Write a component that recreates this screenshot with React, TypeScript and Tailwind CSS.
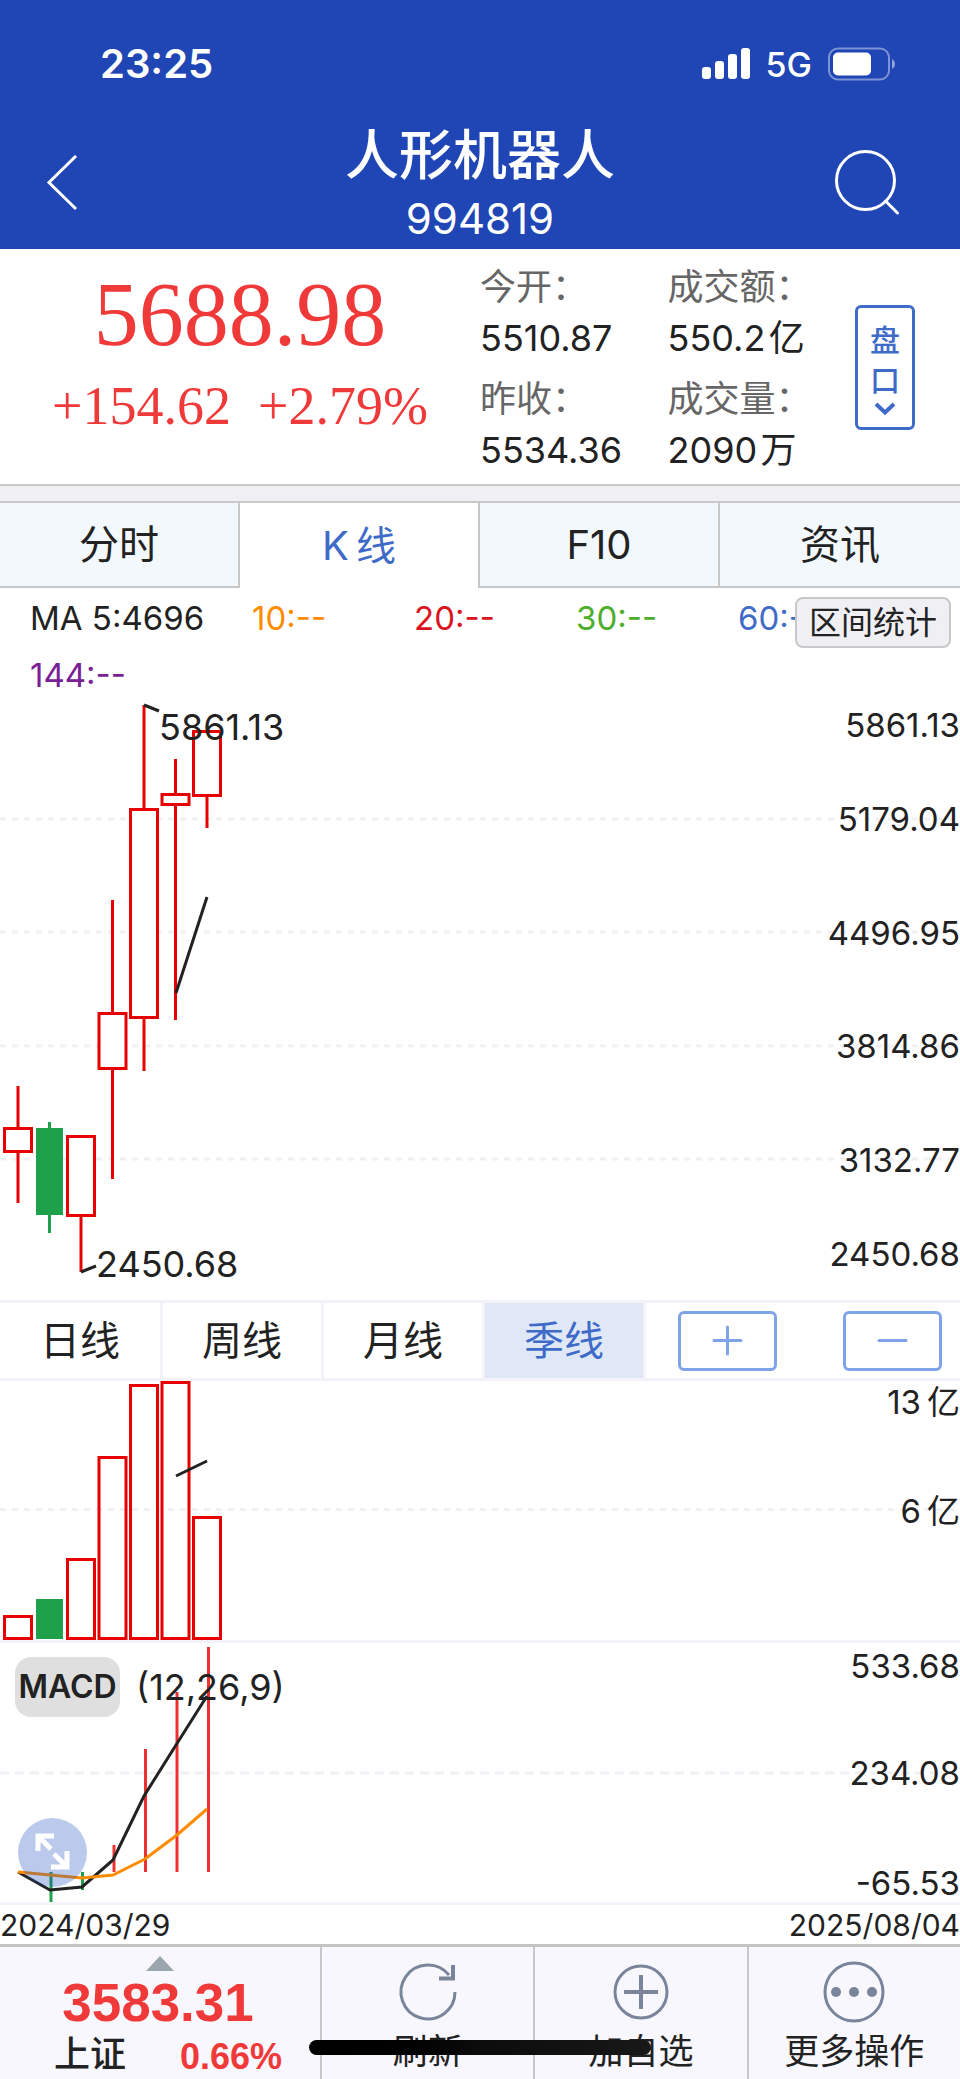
import { useState } from "react";

const PITCH = 31.5;
const FIRST_X = 18;
const cx = (i: number) => FIRST_X + i * PITCH;

// y values are relative to the top of each chart pane
const candles = [
  { up: true, high: 386, top: 427, bottom: 453, low: 503 },
  { up: false, high: 422, top: 428, bottom: 515, low: 533 },
  { up: true, high: 436, top: 435, bottom: 517, low: 572 },
  { up: true, high: 200, top: 312, bottom: 370, low: 479 },
  { up: true, high: 5, top: 108, bottom: 319, low: 371 },
  { up: true, high: 59, top: 93, bottom: 106, low: 320 },
  { up: true, high: 31, top: 30, bottom: 97, low: 128 },
];

const volumes = [234, 218, 177, 75, 3, 0, 135];

const macdBars = [
  { up: false, from: 229, to: 231 },
  { up: false, from: 229, to: 259 },
  { up: false, from: 229, to: 247 },
  { up: true, from: 202, to: 229 },
  { up: true, from: 106, to: 229 },
  { up: true, from: 49, to: 229 },
  { up: true, from: 4, to: 229 },
];

const priceLabels = [
  { text: "5861.13", y: 37 },
  { text: "5179.04", y: 131 },
  { text: "4496.95", y: 245 },
  { text: "3814.86", y: 358 },
  { text: "3132.77", y: 472 },
  { text: "2450.68", y: 566 },
];

const averages = [
  { text: "MA 5:4696", className: "w-[222px] text-[#222222]" },
  { text: "10:--", className: "w-[162px] text-[#ff8c00]" },
  { text: "20:--", className: "w-[162px] text-[#d9141e]" },
  { text: "30:--", className: "w-[162px] text-[#4dae2b]" },
  { text: "60:--", className: "w-[162px] text-[#3f6bc8]" },
  { text: "144:--", className: "w-[162px] text-[#7a1f96]" },
];

function StatusBar() {
  return (
    <div className="flex h-[120px] items-center justify-between pt-2 pr-[64px] pl-[100px]">
      <span className="text-[40px] font-semibold">23:25</span>
      <div className="flex items-center">
        <svg width="48" height="32" fill="currentColor">
          <rect x="0" y="19" width="9" height="12" rx="3" />
          <rect x="13" y="13" width="9" height="18" rx="3" />
          <rect x="26" y="6" width="9" height="25" rx="3" />
          <rect x="39" y="0" width="9" height="31" rx="3" />
        </svg>
        <span className="mx-4 text-[34px] font-medium">5G</span>
        <svg width="68" height="34" fill="none">
          <rect x="1" y="1.5" width="60" height="31" rx="9" stroke="white" strokeOpacity="0.42" strokeWidth="2" />
          <rect x="5" y="5.5" width="38" height="23" rx="5" fill="white" />
          <path d="M64 12c4 2 4 8 0 10z" fill="white" fillOpacity="0.5" />
        </svg>
      </div>
    </div>
  );
}

function Header() {
  return (
    <header className="bg-[#1f46b4] text-white">
      <StatusBar />
      <div className="flex h-[129px] items-center justify-between pr-[60px] pb-1 pl-[46px]">
        <button aria-label="返回" className="w-[79px]">
          <svg width="32" height="56" fill="none" stroke="currentColor" strokeWidth="3">
            <path d="M30 1L3 27.500L30 54" />
          </svg>
        </button>
        <div className="pt-1 text-center">
          <h1 className="text-[54px] leading-[68px] font-medium">人形机器人</h1>
          <p className="text-[42px] leading-[58px] font-normal">994819</p>
        </div>
        <button aria-label="搜索">
          <svg width="65" height="65" fill="none" stroke="currentColor" strokeWidth="3">
            <circle cx="30.500" cy="30.500" r="29" />
            <path d="M50.500 51L62.500 63" strokeLinecap="round" />
          </svg>
        </button>
      </div>
    </header>
  );
}

function Stat({ label, value }: { label: string; value: string }) {
  return (
    <div>
      <dt className="leading-[58px] text-[#666666]">{label}</dt>
      <dd className="leading-[44px]">{value}</dd>
    </div>
  );
}

function Quote() {
  return (
    <section className="flex h-[235px] bg-white">
      <div className="w-1/2 pt-3.5 text-center font-['Liberation_Serif',serif] text-[#f03a3a]">
        <p className="text-[90px] leading-[104px]">5688.98</p>
        <p className="text-[54px] leading-[78px]">+154.62&nbsp;&nbsp;+2.79%</p>
      </div>
      <dl className="grid flex-1 grid-cols-2 content-start gap-y-2.5 pt-[9px] text-[36px] text-[#222222]">
        <Stat label="今开：" value="5510.87" />
        <Stat label="成交额：" value={"550.2\u200a亿"} />
        <Stat label="昨收：" value="5534.36" />
        <Stat label="成交量：" value={"2090\u200a万"} />
      </dl>
      <button className="mt-[56px] mr-[45px] flex h-[125px] w-[60px] flex-col items-center rounded-md border-3 border-[#3f6bc8] pt-3 text-[30px] leading-[40px] font-medium text-[#3f6bc8]">
        <span>盘</span>
        <span>口</span>
        <svg width="22" height="16" fill="none" stroke="currentColor" strokeWidth="4">
          <path d="M2 4L11 12.500L20 4" />
        </svg>
      </button>
    </section>
  );
}

function PageTabs() {
  const [active, setActive] = useState("K\u2009线");
  return (
    <nav className="border-t-2 border-[#c8c8c8] bg-[#efeff4] pt-[15px]">
      <div className="grid grid-cols-4 border-t-2 border-[#c8c8c8] text-[40px]">
        {["分时", "K\u2009线", "F10", "资讯"].map((tab) => (
          <button
            key={tab}
            onClick={() => setActive(tab)}
            className={
              tab === active
                ? "h-[85px] border-r-2 border-[#c8c8c8] bg-white text-[#3f6bc8]"
                : "h-[85px] border-r-2 border-b-2 border-[#c8c8c8] bg-[#f3f8fc] last:border-r-0"
            }
          >
            {tab}
          </button>
        ))}
      </div>
    </nav>
  );
}

function Averages() {
  return (
    <div className="relative h-28">
      <div className="flex flex-wrap pt-0.5 pl-[30px] text-[33px] leading-[57px]">
        {averages.map((item) => (
          <span key={item.text} className={item.className}>
            {item.text}
          </span>
        ))}
      </div>
      <button className="absolute top-[9px] right-[9px] h-[51px] w-[156px] rounded-lg border-2 border-[#c8c8c8] bg-[#efeff4] text-[32px] leading-[46px]">
        区间统计
      </button>
    </div>
  );
}

function PriceChart() {
  return (
    <svg className="block h-[600px] w-full" fill="none" strokeWidth="3">
      {[119, 232, 346, 459].map((y) => (
        <line key={y} x1="0" x2="100%" y1={y} y2={y} stroke="#f0f0f5" strokeDasharray="6 6" />
      ))}
      {candles.map((c, i) => {
        const color = c.up ? "#e60000" : "#1fa04b";
        return (
          <g key={i} stroke={color}>
            <line x1={cx(i)} x2={cx(i)} y1={c.high} y2={c.low} />
            {c.up ? (
              <rect x={cx(i) - 13.5} y={c.top + 1.5} width="27" height={c.bottom - c.top - 3} fill="white" />
            ) : (
              <rect x={cx(i) - 13.5} y={c.top} width="27" height={c.bottom - c.top} fill={color} stroke="none" />
            )}
          </g>
        );
      })}
      <g stroke="#222222">
        <path d="M176 293L207 197" />
        <path d="M144 5L159 11" />
        <path d="M81 572L96 566" />
      </g>
      <g fill="#222222" fontSize="36">
        <text x="159" y="40">5861.13</text>
        <text x="96" y="577">2450.68</text>
      </g>
      <g fill="#222222" fontSize="33" textAnchor="end">
        {priceLabels.map((label) => (
          <text key={label.text} x="100%" y={label.y}>
            {label.text}
          </text>
        ))}
      </g>
    </svg>
  );
}

function PeriodTabs() {
  const [active, setActive] = useState("季线");
  return (
    <div className="flex border-y-3 border-[#f2f2f8]">
      {["日线", "周线", "月线", "季线"].map((period) => (
        <button
          key={period}
          onClick={() => setActive(period)}
          className={
            period === active
              ? "h-[75px] w-[161px] border-r-3 border-[#f2f2f8] bg-[#e0e8f7] text-[40px] text-[#3f6bc8] first:w-[163px]"
              : "h-[75px] w-[161px] border-r-3 border-[#f2f2f8] text-[40px] first:w-[163px]"
          }
        >
          {period}
        </button>
      ))}
      <div className="flex flex-1 items-center justify-between pr-[18px] pl-[32px] text-[#7fa3e8]">
        <button aria-label="放大" className="flex h-[60px] w-[99px] items-center justify-center rounded-md border-3">
          <svg width="31" height="31" stroke="currentColor" strokeWidth="3" strokeLinecap="round">
            <path d="M2 15.500H29M15.500 2V29" />
          </svg>
        </button>
        <button aria-label="缩小" className="flex h-[60px] w-[99px] items-center justify-center rounded-md border-3">
          <svg width="31" height="31" stroke="currentColor" strokeWidth="3" strokeLinecap="round">
            <path d="M2 15.500H29" />
          </svg>
        </button>
      </div>
    </div>
  );
}

function VolumeChart() {
  return (
    <svg className="block h-[259px] w-full" fill="none" strokeWidth="3">
      <line x1="0" x2="100%" y1="128.500" y2="128.500" stroke="#f0f0f5" strokeDasharray="6 6" />
      {volumes.map((top, i) =>
        candles[i].up ? (
          <rect key={i} x={cx(i) - 13.5} y={top + 1.5} width="27" height={256 - top} stroke="#e60000" />
        ) : (
          <rect key={i} x={cx(i) - 13.5} y={top} width="27" height={258 - top} fill="#1fa04b" />
        )
      )}
      <path d="M176 95L207 80" stroke="#222222" />
      <g fill="#222222" fontSize="33" textAnchor="end">
        <text x="100%" y="33">{"13\u2009亿"}</text>
        <text x="100%" y="142">{"6\u2009亿"}</text>
      </g>
    </svg>
  );
}

function MacdChart() {
  return (
    <div className="relative border-y-3 border-[#f2f2f8]">
      <svg className="block h-[259px] w-full" fill="none" strokeWidth="3">
        <line x1="0" x2="100%" y1="130" y2="130" stroke="#f0f0f5" strokeDasharray="9 6" />
        {macdBars.map((bar, i) => (
          <line
            key={i}
            x1={cx(i) + 1.5}
            x2={cx(i) + 1.5}
            y1={bar.from}
            y2={bar.to}
            stroke={bar.up ? "#f03030" : "#1fa04b"}
          />
        ))}
        <path d="M18 229L50 247L82 244L113 217L144 153L176 102L207 53" stroke="#222222" />
        <path d="M18 229L82 235L113 232L145 216L177 192L207 166" stroke="#ff8c00" />
        <g fill="#222222" fontSize="33" textAnchor="end">
          <text x="100%" y="35">533.68</text>
          <text x="100%" y="142">234.08</text>
          <text x="100%" y="252">-65.53</text>
        </g>
      </svg>
      <div className="absolute top-[14px] left-[15px] flex items-center gap-4">
        <button className="h-[60px] w-[105px] rounded-2xl bg-[#dfdfdf] text-[32px] font-semibold">MACD</button>
        <span className="text-[36px]">(12,26,9)</span>
      </div>
      <button aria-label="全屏" className="absolute bottom-[15px] left-[18px] size-[69px] rounded-full bg-[#1f4fc0]/30 text-white">
        <svg width="69" height="69" fill="none" stroke="currentColor" strokeWidth="5">
          <path d="M20 33V18H36M20 18L33 31" />
          <path d="M49 33V49H33M49 49L36 36" />
        </svg>
      </button>
    </div>
  );
}

function BottomBar() {
  const item = "flex flex-col items-center border-l-2 border-[#c8c8c8] pt-[12px]";
  return (
    <footer className="relative grid h-[135px] grid-cols-[3fr_2fr_2fr_2fr] border-t-3 border-[#c4c4c4] bg-[#f7f7fd]">
      <a href="#index" className="flex flex-col items-center pt-[9px]">
        <svg width="28" height="15" fill="#9aa5ae">
          <path d="M14 0L28 15H0z" />
        </svg>
        <span className="pr-1 font-['Liberation_Sans',sans-serif] text-[53px] leading-[64px] font-bold text-[#f03a3a]">
          3583.31
        </span>
        <span className="flex w-full justify-between pr-[38px] pl-[54px] text-[36px] leading-[38px] font-medium">
          上证
          <span className="font-['Liberation_Sans',sans-serif] leading-[44px] font-bold text-[#f03a3a]">0.66%</span>
        </span>
      </a>
      <button className={item}>
        <svg width="66" height="66" fill="none" stroke="#7a859b" strokeWidth="3">
          <path d="M60 33A27 27 0 1 1 54 16" />
          <path d="M58 6V19.500H44" strokeWidth="4" />
        </svg>
        <span className="text-[35px] leading-[52px]">刷新</span>
      </button>
      <button className={item}>
        <svg width="66" height="66" fill="none" stroke="#7a859b" strokeWidth="3">
          <circle cx="33" cy="33" r="26" />
          <path d="M16 33H50M33 16V50" strokeWidth="4" />
        </svg>
        <span className="text-[35px] leading-[52px]">加自选</span>
      </button>
      <button className={item}>
        <svg width="66" height="66" fill="none" stroke="#7a859b" strokeWidth="3">
          <circle cx="33" cy="33" r="29" />
          <g fill="#7a859b" stroke="none">
            <circle cx="15" cy="33" r="5" />
            <circle cx="33" cy="33" r="5" />
            <circle cx="51" cy="33" r="5" />
          </g>
        </svg>
        <span className="text-[35px] leading-[52px]">更多操作</span>
      </button>
      <div className="absolute bottom-6 left-1/2 h-[15px] w-[342px] -translate-x-1/2 rounded-full bg-linear-to-r from-black via-[#0c0c0c] to-[#181818]" />
    </footer>
  );
}

export default function App() {
  return (
    <div className="bg-white font-[Inter,'Noto_Sans_CJK_SC',sans-serif] text-[#222222]">
      <Header />
      <Quote />
      <PageTabs />
      <main>
        <Averages />
        <PriceChart />
        <PeriodTabs />
        <VolumeChart />
        <MacdChart />
        <div className="flex justify-between pt-px text-[30px] leading-[38px]">
          <span>2024/03/29</span>
          <span>2025/08/04</span>
        </div>
      </main>
      <BottomBar />
    </div>
  );
}
